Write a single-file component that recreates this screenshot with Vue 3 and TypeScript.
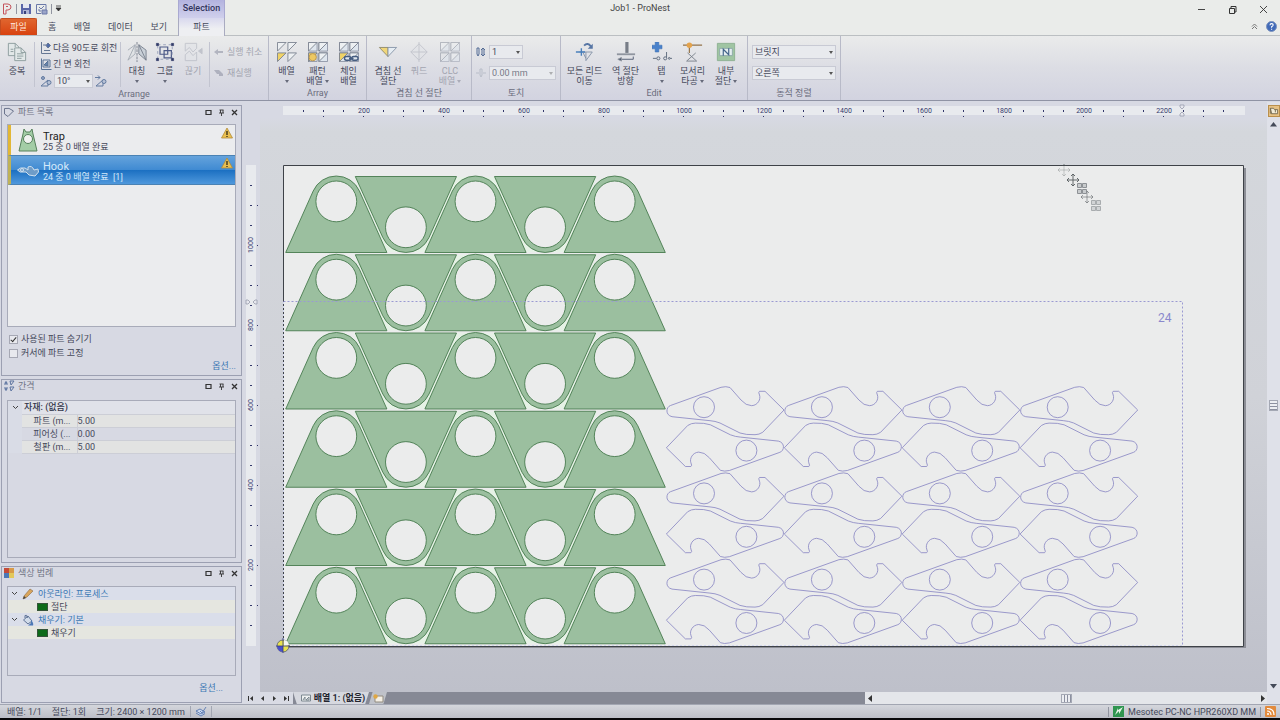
<script setup lang="ts">
import { ref } from 'vue'

interface Tool {
  icon: string
  lines: string[]
  arrow?: boolean
  off?: boolean
  size?: string
}

const arrayTools: Tool[] = [
  { icon: 'array', lines: ['배열'], arrow: true },
  { icon: 'pattern', lines: ['패턴', '배열'], arrow: true },
  { icon: 'chain', lines: ['체인', '배열'] },
]
const cutTools: Tool[] = [
  { icon: 'common', lines: ['겹침 선', '절단'] },
  { icon: 'quad', lines: ['쿼드'], off: true },
  { icon: 'clc', lines: ['CLC', '배열'], arrow: true, off: true },
]
const editTools: Tool[] = [
  { icon: 'leads', lines: ['모든 리드', '이동'], size: 'wide' },
  { icon: 'reverse', lines: ['역 절단', '방향'], size: 'wide' },
  { icon: 'tab', lines: ['탭'], arrow: true },
  { icon: 'corner', lines: ['모서리', '타공'], arrow: true },
  { icon: 'inner', lines: ['내부', '절단'], arrow: true, size: 'mid' },
]
const arrangeTools: Tool[] = [
  { icon: 'mirror', lines: ['대칭'], arrow: true },
  { icon: 'group', lines: ['그룹'], arrow: true },
  { icon: 'break', lines: ['끊기'], off: true },
]
const toolGroups = [
  { name: 'Array', tools: arrayTools, cls: 'g-array' },
  { name: '겹침 선 절단', tools: cutTools, cls: 'g-cut' },
]

const tabs = ['홈', '배열', '데이터', '보기']
const panelButtons = [
  { name: 'Maximize', d: 'M1 1.500H6V5.500H1Z', w: 1.2 },
  { name: 'Pin', d: 'M1.500 1H5.500M2.500 1V4M5 1V4M1 4H6M3.500 4V7', w: 0.9 },
  { name: 'Close', d: 'M1 1L6 6M6 1L1 6', w: 1.3 },
]
const sheetButtons = [
  { name: 'First', d: 'M1 1H2V6H1ZM6 1V6L3 3.500Z' },
  { name: 'Previous', d: 'M5 1V6L2 3.500Z' },
  { name: 'Next', d: 'M2 1V6L5 3.500Z' },
  { name: 'Last', d: 'M1 1V6L4 3.500ZM5 1H6V6H5Z' },
]
const hideUsed = ref(true)
const lockCursor = ref(false)
const selected = ref('Hook')
const parts = [
  { name: 'Trap', info: '25 중 0 배열 완료' },
  { name: 'Hook', info: '24 중 0 배열 완료  [1]' },
]
const spacing = [
  { name: '파트 (m...', value: '5.00' },
  { name: '피어싱 (...', value: '0.00' },
  { name: '철판 (m...', value: '5.00' },
]

const rows = [0, 1, 2, 3, 4, 5].map((i) => i * 78.25)
const ups = [0, 139.2, 278.4]
const downs = [0, 139.2]
const hookCols = [0, 1, 2, 3].map((i) => i * 117.9)
const hookRows = [0, 86.2, 172.4]
const hook =
  'M672 416.7C665 415 666 407 670.5 405.5L721 387.3Q726 386 730 387.5L741 400Q746 405.8 751.7 405.7C758 405.3 761 399 759.5 395Q758 392 759.5 391.3H765L784 410L762.7 432.3Q759 434.7 755 434.7Q746 435 740 433L720 423Q715 421 710 420.7Z'
const ruler = Array.from({ length: 47 }, (_, i) => i + 1)
const rulerY = Array.from({ length: 23 }, (_, i) => i + 1)
</script>

<template>
  <div class="app">
    <header>
      <div class="title-row">
        <div class="left-title">
          <div class="qat">
            <svg width="12" height="12" viewBox="0 0 12 12" fill="none" stroke="#c5545c" aria-hidden="true"><path d="M2.500 11V1H7Q10 1.500 10 4T7 7H5V11ZM5 3.500H7" /></svg>
            <i class="vline"></i>
            <button aria-label="Save"><svg width="12" height="12" viewBox="0 0 12 12"><path d="M1 1H11V11H1Z" fill="#5a66a8" /><path d="M3 1H9V5H3Z" fill="#e6e8f2" /><path d="M3 7H9V11H3Z" fill="#aeb4d4" /><path d="M4 8H6V11H4Z" fill="#38427c" /></svg></button>
            <button aria-label="Save job"><svg width="13" height="12" viewBox="0 0 13 12" fill="none" stroke="#6b79a8"><path d="M1.500 1.500H11V7M1.500 1.500V10.500H6M4 4L6 6L9 3M4 6V8H6" /><path d="M7 7H12V11H7Z" fill="#9aa4c8" /></svg></button>
            <i class="vline"></i>
            <button aria-label="Customize"><svg width="7" height="7" viewBox="0 0 7 7"><path d="M1 1H6M1 3L3.500 6L6 3Z" stroke="#333" stroke-width=".8" fill="#333" /></svg></button>
          </div>
          <div class="context">Selection</div>
        </div>
        <h1>Job1 - ProNest</h1>
        <div class="win">
          <button aria-label="Minimize"><svg width="9" height="9" viewBox="0 0 9 9" stroke="#444"><path d="M1 4.500H8" /></svg></button>
          <button aria-label="Restore"><svg width="9" height="9" viewBox="0 0 9 9" fill="none" stroke="#333"><path d="M1.500 3.500H6.500V8.500H1.500ZM3 3V1.500H8V7H7" /></svg></button>
          <button aria-label="Close"><svg width="9" height="9" viewBox="0 0 9 9" stroke="#333" stroke-width=".9"><path d="M1 1L8 8M8 1L1 8" /></svg></button>
        </div>
      </div>
      <nav class="tab-row">
        <button class="file">파일</button>
        <div class="tabs"><button v-for="t in tabs" :key="t">{{ t }}</button></div>
        <button class="active">파트</button>
        <div class="help">
          <button aria-label="Collapse ribbon"><svg width="7" height="7" viewBox="0 0 7 7" fill="none" stroke="#777"><path d="M1 3.500L3.500 1L6 3.500M1 6L3.500 3.500L6 6" /></svg></button>
          <button aria-label="Help"><svg width="11" height="11" viewBox="0 0 11 11"><circle cx="5.500" cy="5.500" r="5" fill="#416ab8" stroke="#7c93bd" /><path d="M4 4.200Q4 2.600 5.600 2.600T7.100 4.200Q7 5 5.600 5.700V6.700M5.600 7.700V8.700" fill="none" stroke="#fff" stroke-width="1.100" /></svg></button>
        </div>
      </nav>
    </header>

    <section class="ribbon">
      <div class="group g-arrange">
        <div class="body">
          <button class="tool dup">
            <svg class="ico" viewBox="0 0 22 22" fill="#e2e8e8" stroke="#8a9a9c"><path d="M1.500 1.500H9L13 5.500V15H1.500Z" /><path d="M8.500 6.500H15.500L20.500 11.500V20.500H8.500Z" /><path d="M15.500 6.500V11.500H20.500M9 1.500V5.500M11 13H18M11 15.500H18M11 18H16M4 8H7M4 10.500H7" fill="none" /></svg>
            <span>중복</span>
          </button>
          <i class="sep"></i>
          <div class="stack">
            <button><svg width="12" height="12" viewBox="0 0 12 12" fill="none" stroke="#667894"><path d="M1.500 0V11.500H11M4 8.500H10M3 3H6" /><path d="M8 1L10.500 3.500L8 6L6 3.500Z" fill="#506caa" /></svg>다음 90도로 회전</button>
            <button><svg width="12" height="12" viewBox="0 0 12 12" fill="none" stroke="#587296"><path d="M1.500 .500V11.500H11.500M3 2H10V9H3Z" /><path d="M4 7L8 3V8Z" fill="#6684ac" /></svg>긴 면 회전</button>
            <div class="angle">
              <button aria-label="Rotate left"><svg width="12" height="12" viewBox="0 0 12 12" fill="none" stroke="#637ba0"><path d="M1 11L8 5V11Z" /><circle cx="3" cy="3" r="1.500" fill="#96a6c4" /><circle cx="9" cy="7.500" r="2" fill="#b8c2d6" /></svg></button>
              <span class="pick"><select aria-label="Angle"><option>10°</option></select></span>
              <button aria-label="Rotate right"><svg width="12" height="12" viewBox="0 0 12 12" fill="none" stroke="#637ba0"><path d="M0 2.500H5M3 .500L5 2.500L3 4.500M1 11L8 5V11Z" /><circle cx="9" cy="6.500" r="2" fill="#b8c2d6" /></svg></button>
            </div>
          </div>
          <i class="sep"></i>
          <div class="tools trio">
            <button v-for="t in arrangeTools" :key="t.icon" class="tool slim" :disabled="t.off">
              <svg v-if="t.icon === 'mirror'" class="ico" viewBox="0 0 22 22" fill="none" stroke="#777f8c"><path d="M11 0V22" stroke-dasharray="3 1" /><path d="M9 3V13L1 20ZM1 9L9 3" stroke="#a4abb4" fill="#e0e3e6" /><path d="M13 3L21 20L13 13ZM13 3L21 9V20" fill="#c9d0d8" /></svg>
              <svg v-else-if="t.icon === 'group'" class="ico" viewBox="0 0 22 22" fill="none" stroke="#4d5a88"><path d="M5.500 5.500H14V13.500H5.500ZM10 9.500H18V17.500H10Z" stroke-width="1.300" /><path d="M3 3H19V19H3Z" stroke-dasharray="3 3" stroke="#97a0ba" /><path d="M1.500 1.500H4V4H1.500ZM18 1.500H20.500V4H18ZM1.500 18H4V20.500H1.500ZM18 18H20.500V20.500H18Z" fill="#303a68" stroke="#303a68" stroke-width=".6" /></svg>
              <svg v-else class="ico" viewBox="0 0 22 22" fill="#e2e4e8" stroke="#a0a5b2"><path d="M2.500 1.500H15V7L11 11L7 6L2.500 10ZM2.500 14L7 10L11 15L15 11V20.500H2.500Z" /><path d="M21 7V13L17 10Z" fill="#a0a5b2" /></svg>
              <span>{{ t.lines[0] }}</span>
              <b v-if="t.arrow" class="tri"></b>
            </button>
          </div>
          <i class="sep"></i>
          <div class="undo">
            <button disabled><svg width="10" height="8" viewBox="0 0 10 8"><path d="M0 4L4 1V3H9V5H4V7Z" fill="#83879a" /></svg>실행 취소</button>
            <button disabled><svg width="10" height="8" viewBox="0 0 10 8"><path d="M0 1H5L9 5V7H5V5H3Z" fill="#83879a" /></svg>재실행</button>
          </div>
        </div>
        <div class="caption">Arrange</div>
      </div>

      <div v-for="g in toolGroups" :key="g.name" class="group" :class="g.cls">
        <div class="body tools">
          <button v-for="t in g.tools" :key="t.icon" class="tool" :disabled="t.off">
            <svg v-if="t.icon === 'common'" class="ico" viewBox="0 0 22 22" stroke="#8f8a6c"><path d="M1.500 6H11V16Z" fill="#f0d679" /><path d="M11 6H20.500L11 16Z" fill="#e6edf3" stroke="#8795a8" /></svg>
            <svg v-else-if="t.icon === 'quad'" class="ico" viewBox="0 0 22 22" fill="#e2e4e8" stroke="#a2a6b2"><path d="M11 2L20 11L11 20L2 11ZM11 0V22M2 11H20" /></svg>
            <svg v-else class="ico" viewBox="0 0 22 22" fill="#edf0f2" stroke="#7a8290">
              <path v-if="t.icon !== 'array'" d="M.500 .500H10V10H.500ZM12 .500H21.500V10H12ZM.500 12H10V21.500H.500ZM12 12H21.500V21.500H12Z" fill="#dfe6ee" stroke="#8c94a4" />
              <path d="M.500 .500H10L.500 10ZM12 .500H21.500L12 10ZM12 12H21.500L12 21.500Z" />
              <path d="M.500 12H10L.500 21.500Z" :fill="t.off ? '#e3e5e8' : '#f0d367'" />
              <circle v-if="t.icon === 'pattern'" cx="5.200" cy="16.700" r="4" fill="#edc862" stroke="#ba9550" />
              <g v-if="t.icon === 'chain'" fill="#dfe6ee" stroke="#465d80" stroke-width="1.600"><rect x="6" y="16" width="7" height="4" rx="2" /><rect x="14" y="16" width="7" height="4" rx="2" /><path d="M11 18H16" /></g>
            </svg>
            <span>{{ t.lines[0] }}</span>
            <span v-if="t.lines[1]">{{ t.lines[1] }}<b v-if="t.arrow" class="tri"></b></span>
            <b v-else-if="t.arrow" class="tri"></b>
          </button>
        </div>
        <div class="caption">{{ g.name }}</div>
      </div>

      <div class="group g-torch">
        <div class="body fields">
          <label><svg width="10" height="10" viewBox="0 0 10 10" fill="none" stroke="#536b94"><path d="M1 1H3V7L2 9L1 7ZM5 5H9M7 1L5 3H9ZM7 9L5 7H9Z" /></svg><span class="pick small"><select aria-label="Torch count"><option>1</option></select></span></label>
          <label><svg width="10" height="10" viewBox="0 0 10 10" fill="none" stroke="#b8bdc8"><path d="M4 1H6V7L5 9L4 7ZM0 5H3M7 5H10" /></svg><span class="pick off"><select aria-label="Torch spacing" disabled><option>0.00 mm</option></select></span></label>
        </div>
        <div class="caption">토치</div>
      </div>

      <div class="group g-edit">
        <div class="body tools">
          <button v-for="t in editTools" :key="t.icon" class="tool" :class="t.size">
            <svg v-if="t.icon === 'leads'" class="ico" viewBox="0 0 22 22" fill="none" stroke="#6684b0"><path d="M5 11H19L12 20.500V11M9 12L12 18" stroke="#8493a8" /><path d="M1 11H11M7 7V15" stroke="#4a80bc" stroke-width="1.500" /><path d="M10 4Q14 0 17.500 5" stroke="#5675a4" stroke-width="2.200" /><path d="M19.500 2V7.500H14Z" fill="#5675a4" stroke="none" /></svg>
            <svg v-else-if="t.icon === 'reverse'" class="ico" viewBox="0 0 22 22" fill="none" stroke="#8f959f"><path d="M1 13.500H21" stroke-width="2" /><path d="M12 0V12" stroke="#777d87" stroke-width="3.500" /><path d="M19 16V19H4" stroke="#4c5870" /><path d="M2 19L6 17V21Z" fill="#4c5870" /></svg>
            <svg v-else-if="t.icon === 'tab'" class="ico" viewBox="0 0 22 22" fill="none" stroke="#596779"><path d="M3.500 0H7.500V3.500H11V7.500H7.500V11H3.500V7.500H0V3.500H3.500Z" fill="#4a82cb" stroke="#3d70b3" stroke-width=".6" /><path d="M1 18H5M16 11V17M20 18H22" /><circle cx="7" cy="18" r="1.700" /><circle cx="14.500" cy="18" r="1.700" /><circle cx="19" cy="18" r="1" /></svg>
            <svg v-else-if="t.icon === 'corner'" class="ico" viewBox="0 0 22 22" fill="none" stroke="#78808a"><path d="M0 3.500H21M7 4V12" stroke="#93734a" stroke-width="1.300" /><circle cx="7" cy="3.500" r="3" fill="#e4a34c" stroke="none" /><path d="M5 12L15 21H4L14 12" /></svg>
            <svg v-else class="ico" viewBox="0 0 22 22" fill="none" stroke="#5a7c80"><path d="M1.500 1.500H20.500V20.500H1.500Z" fill="#a0c5a3" stroke="#8caf92" /><path d="M4 7H18V15H4Z" fill="#e5eef0" stroke="#8ca8a8" /><path d="M8 15V8L14 14V7" stroke="#44668c" stroke-width="1.300" /></svg>
            <span>{{ t.lines[0] }}</span>
            <span v-if="t.lines[1]">{{ t.lines[1] }}<b v-if="t.arrow" class="tri"></b></span>
            <b v-else-if="t.arrow" class="tri"></b>
          </button>
        </div>
        <div class="caption">Edit</div>
      </div>

      <div class="group g-align">
        <div class="body fields">
          <span class="pick"><select aria-label="Align mode"><option>브릿지</option></select></span>
          <span class="pick"><select aria-label="Align side"><option>오른쪽</option></select></span>
        </div>
        <div class="caption">동적 정렬</div>
      </div>
    </section>

    <main>
      <aside>
        <section class="panel">
          <div class="phead">
            <svg width="12" height="12" viewBox="0 0 12 12" fill="none" stroke="#6b748c"><path d="M1.500 2.500Q6 1 10.500 5L5 10.500L1.500 8Z" /></svg>
            <h2>파트 목록</h2>
            <button v-for="b in panelButtons" :key="b.name" :aria-label="b.name"><svg width="7" height="7" viewBox="0 0 7 7"><path :d="b.d" fill="none" stroke="#333" :stroke-width="b.w" /></svg></button>
          </div>
          <div class="box list">
            <button v-for="p in parts" :key="p.name" class="part" :class="{ on: p.name === selected }" @click="selected = p.name">
              <svg v-if="p.name === 'Trap'" width="22" height="26" viewBox="0 0 22 26"><path d="M2 24L6 7L7 2L9 5H13L15 2L16 7L20 24Z" fill="#a3cda6" stroke="#56805c" /><circle cx="11" cy="12" r="4.500" fill="#f0f2f0" stroke="#56805c" /></svg>
              <svg v-else width="22" height="26" viewBox="0 0 22 26"><path d="M.500 13Q3 10 8 11L11 13L11 10Q15 8 17 13L21 12L21.500 15L18 19L12 18L9 15L3 15Z" fill="#6e9cc8" stroke="#d1e1ee" /><circle cx="5" cy="13" r="1.500" fill="none" stroke="#d1e1ee" /></svg>
              <span class="ptxt"><strong>{{ p.name }}</strong><small>{{ p.info }}</small></span>
              <svg class="warn" width="12" height="12" viewBox="0 0 12 12"><path d="M6 1L11.500 11H.500Z" fill="#e9bf50" stroke="#b38c3a" stroke-width=".8" /><path d="M6 4V8M6 9V10" stroke="#3e3418" stroke-width="1.400" /></svg>
            </button>
          </div>
          <div class="checks">
            <label><input v-model="hideUsed" type="checkbox" />사용된 파트 숨기기</label>
            <label><input v-model="lockCursor" type="checkbox" />커서에 파트 고정</label>
          </div>
          <a href="#" class="opt">옵션...</a>
        </section>

        <section class="panel mid">
          <div class="phead">
            <svg width="12" height="12" viewBox="0 0 12 12" fill="none" stroke="#5d74a0"><path d="M1 4H5M1 8H5M3 1V4M3 8V11M2 2L3 3.500L4 2M2 10L3 8.500L4 10M7 1H11L8 5ZM7 7H11L8 11Z" /></svg>
            <h2>간격</h2>
            <button v-for="b in panelButtons" :key="b.name" :aria-label="b.name"><svg width="7" height="7" viewBox="0 0 7 7"><path :d="b.d" fill="none" stroke="#333" :stroke-width="b.w" /></svg></button>
          </div>
          <div class="box">
            <table>
              <colgroup><col class="c-gut" /><col class="c-name" /><col /></colgroup>
              <thead><tr><th class="gut"><svg width="7" height="5" viewBox="0 0 7 5"><path d="M1 1L3.500 3.500L6 1" fill="none" stroke="#444" /></svg></th><th colspan="2">자재: (없음)</th></tr></thead>
              <tbody><tr v-for="s in spacing" :key="s.name"><td class="gut"></td><td class="name">{{ s.name }}</td><td>{{ s.value }}</td></tr></tbody>
            </table>
          </div>
        </section>

        <section class="panel">
          <div class="phead">
            <svg width="12" height="12" viewBox="0 0 12 12"><path d="M1 1H6V6H1Z" fill="#c44b39" /><path d="M6 1H11V6H6Z" fill="#d89a47" /><path d="M1 6H6V11H1Z" fill="#4c78b6" /><path d="M6 6H11V11H6Z" fill="#e3c85a" /></svg>
            <h2>색상 범례</h2>
            <button v-for="b in panelButtons" :key="b.name" :aria-label="b.name"><svg width="7" height="7" viewBox="0 0 7 7"><path :d="b.d" fill="none" stroke="#333" :stroke-width="b.w" /></svg></button>
          </div>
          <div class="box legend">
            <div class="cat"><svg width="7" height="5" viewBox="0 0 7 5"><path d="M1 1L3.500 3.500L6 1" fill="none" stroke="#444" /></svg><svg width="12" height="12" viewBox="0 0 12 12"><path d="M1 11L2 8L8 1L11 3L5 9Z" fill="#d9a55c" stroke="#8a6a44" stroke-width=".6" /><path d="M1 11L2 8L4 10Z" fill="#444" /></svg>아웃라인: 프로세스</div>
            <div class="leaf"><i></i>절단</div>
            <div class="cat"><svg width="7" height="5" viewBox="0 0 7 5"><path d="M1 1L3.500 3.500L6 1" fill="none" stroke="#444" /></svg><svg width="12" height="12" viewBox="0 0 12 12" fill="#d2dcea" stroke="#5f7396"><path d="M1.500 6L6 2L10 7L6 10ZM3 4V1.500Q5 0 5.500 4" /><path d="M9 6Q12 9 11 11.500H6L9 9Z" fill="#4c78b6" stroke="none" /></svg>채우기: 기본</div>
            <div class="leaf"><i></i>채우기</div>
          </div>
          <a href="#" class="opt inset">옵션...</a>
        </section>
      </aside>

      <div class="work">
        <svg class="stage" viewBox="242 102 1025 590" preserveAspectRatio="xMinYMin meet">
          <defs>
            <path id="hook-part" :d="hook" />
          </defs>
          <rect x="283" y="106" width="962" height="9" fill="#e8eaee" />
          <rect x="246" y="165" width="10" height="481" fill="#e8eaee" />
          <g fill="#34386c">
            <template v-for="i in ruler" :key="i">
              <text v-if="i % 4 === 0" :x="284 + i * 20" y="113" class="rt">{{ i * 50 }}</text>
              <rect v-else :x="283 + i * 20" y="110" width="1" height="2" />
              <rect v-if="i % 2 === 0" :x="283 + i * 20" y="116" width="1" height="1" />
            </template>
            <template v-for="i in rulerY" :key="i">
              <text v-if="i % 4 === 0" class="rt" :transform="`translate(253 ${645 - i * 20}) rotate(-90)`">{{ i * 50 }}</text>
              <rect v-else x="250" :y="645 - i * 20" width="2" height="1" />
              <rect v-if="i % 2 === 0" x="257" :y="645 - i * 20" width="1" height="1" />
            </template>
          </g>
          <path d="M1180 105H1184V107L1182 109L1180 107ZM1180 116V114L1182 112L1184 114V116ZM246 300H248L250 302L248 304H246ZM257 300H255L253 302L255 304H257Z" fill="#e6e7ee" stroke="#8e92a4" stroke-width=".7" />

          <path d="M286 168H1246V648H286Z" fill="#8c8e96" />
          <path d="M283.500 165.500H1243.500V646.500H283.500Z" fill="#ebecec" stroke="#3e4248" />

          <g v-for="y in rows" :key="y" :transform="`translate(0 ${y})`" fill="#9bbf9f" stroke="#477a4e" stroke-width=".9">
            <path d="M354 177H597L575 226L568 252H383L376 226Z" fill="#e6f2e6" stroke="none" />
            <path v-for="x in ups" :key="x" :transform="`translate(${x} 0)`" d="M285.700 252.500L313.200 191A25.300 25.300 0 0 1 359.400 191L386.900 252.500Z" />
            <path v-for="x in downs" :key="'d' + x" :transform="`translate(${x} 0)`" d="M355.300 176.500L382.800 237.500A25.300 25.300 0 0 0 429 237.500L456.500 176.500Z" />
            <g fill="#ebecec">
              <circle v-for="x in ups" :key="'c' + x" :cx="336.3 + x" cy="201.400" r="20.400" />
              <circle v-for="x in downs" :key="'e' + x" :cx="405.9 + x" cy="227.300" r="20.400" />
            </g>
          </g>

          <g fill="none" stroke="#8583c2" stroke-width=".8">
            <template v-for="y in hookRows" :key="y">
              <g v-for="x in hookCols" :key="x" :transform="`translate(${x} ${y})`">
                <use href="#hook-part" />
                <circle cx="704" cy="407.200" r="10.500" />
                <g transform="rotate(180 725.200 428.900)">
                  <use href="#hook-part" />
                  <circle cx="704" cy="407.200" r="10.500" />
                </g>
              </g>
            </template>
          </g>

          <path d="M283.500 301.500H1182.500V645.500" fill="none" stroke="#9a9ad2" stroke-dasharray="2 2" />
          <path d="M283.500 302V645.500H1182" fill="none" stroke="#d4d8ee" stroke-dasharray="2 2" />
          <text x="1158" y="322" class="count">24</text>

          <circle cx="283" cy="646" r="6" fill="#e8e24e" stroke="#555a70" stroke-width=".8" />
          <path d="M283 646V652A6 6 0 0 1 277 646Z" fill="#4a50c8" />
          <path d="M284 646V640A6 6 0 0 1 289 645Z" fill="#f4f6f2" />
          <path d="M283 638V653M276 646H290" stroke="#333a80" stroke-width=".8" />

          <g fill="none" stroke-width=".9">
            <g id="move-mark" stroke="#555b5e"><path d="M1067 180H1079M1073 174V186M1069 178L1067 180L1069 182M1077 178L1079 180L1077 182M1071 176L1073 174L1075 176M1071 184L1073 186L1075 184" /></g>
            <use href="#move-mark" x="-9" y="-10" opacity=".3" />
            <use href="#move-mark" x="14" y="17" opacity=".6" />
            <path id="grid-mark" d="M1077.500 183.500H1081.500V187.500H1077.500ZM1082.500 183.500H1086.500V187.500H1082.500ZM1077.500 189.500H1081.500V193.500H1077.500ZM1082.500 189.500H1086.500V193.500H1082.500Z" fill="#c8cbcd" stroke="#84888c" />
            <use href="#grid-mark" x="14" y="17" opacity=".7" />
          </g>
        </svg>
        <div class="vbar">
          <button class="zoomfit" aria-label="Zoom"><svg width="10" height="10" viewBox="0 0 11 11" fill="#f2ecd8" stroke="#73684d"><path d="M1.500 2.500H5L6 4H9.500V8.500H3ZM1.500 2.500V8L3 8.500M7 4V7" /></svg></button>
          <button aria-label="Scroll up"><svg width="7" height="5" viewBox="0 0 7 5"><path d="M0 4.500L3.500 0L7 4.500Z" fill="#444a58" /></svg></button>
          <div class="track"><i></i></div>
          <button aria-label="Scroll down"><svg width="7" height="5" viewBox="0 0 7 5"><path d="M0 0H7L3.500 4.500Z" fill="#444a58" /></svg></button>
        </div>
        <div class="sheetbar">
          <div class="navs">
            <button v-for="b in sheetButtons" :key="b.name" :aria-label="b.name"><svg width="7" height="7" viewBox="0 0 7 7" fill="#333"><path :d="b.d" /></svg></button>
          </div>
          <button class="sheet"><svg width="10" height="8" viewBox="0 0 10 8" fill="#eef0f0" stroke="#7c8890"><path d="M.500 1H9.500V7H.500ZM2 6L4 3V6M5 6L8 3V6Z" /></svg>배열 1: (없음)</button>
          <button class="newsheet" aria-label="New nest"><svg width="11" height="9" viewBox="0 0 11 9"><path d="M2 2H10V8H2Z" fill="#f4efe4" stroke="#928b80" /><circle cx="2.500" cy="2.500" r="2.200" fill="#dfa744" /></svg></button>
          <div class="fill"></div>
          <div class="hbar">
            <button aria-label="Scroll left"><svg width="5" height="7" viewBox="0 0 5 7"><path d="M4 0V7L0 3.500Z" fill="#333" /></svg></button>
            <div class="track"><i></i></div>
            <button aria-label="Scroll right"><svg width="5" height="7" viewBox="0 0 5 7"><path d="M1 0V7L5 3.500Z" fill="#333" /></svg></button>
          </div>
          <div class="corner"></div>
        </div>
      </div>
    </main>

    <footer>
      <span>배열: 1/1</span><span>절단: 1회</span><span>크기: 2400 × 1200 mm</span>
      <div class="foot-icon">
        <svg width="12" height="11" viewBox="0 0 12 11" fill="#cddaf0" stroke="#5a79b0" stroke-width=".9"><path d="M1 5L5 3L10 6L6 8ZM1 7L6 10L10 7.500" /><path d="M5 5L7 7L11 1" fill="none" /></svg>
      </div>
      <div class="machine">
        <i class="vline"></i>
        <svg width="11" height="11" viewBox="0 0 11 11"><path d="M0 0H11V11H0Z" fill="#2f9550" /><path d="M2 9L6 5V8L10 1L5 4V2Z" fill="#e8f5e8" /></svg>
        <span>Mesotec PC-NC HPR260XD MM</span>
        <i class="vline"></i>
        <svg width="11" height="11" viewBox="0 0 11 11"><rect width="11" height="11" rx="1" fill="#e28a3c" /><g fill="none" stroke="#fff" stroke-width="1.200"><path d="M2 5Q6 5 6 9M2 2.500Q9 2.500 9 9" /></g><circle cx="3" cy="8" r="1" fill="#fff" /></svg>
      </div>
    </footer>
  </div>
</template>

<style>
body {
  margin: 0;
  background: #08080a;
}
</style>

<style scoped>
.app {
  box-sizing: border-box;
  display: flex;
  flex-direction: column;
  height: 100vh;
  padding-bottom: 2px;
  overflow: hidden;
  background: #08080a;
  color: #45485a;
  font: 9px/10px Roboto, "Noto Sans CJK KR", sans-serif;
}
.app *,
.app *::before,
.app *::after { box-sizing: border-box; }
button, select, input {
  margin: 0;
  padding: 0;
  border: 0;
  background: none;
  color: inherit;
  font: inherit;
}
button {
  display: inline-flex;
  align-items: center;
  justify-content: center;
  white-space: nowrap;
}
svg { display: block; flex: none; }
h1, h2 { margin: 0; font: inherit; }

header { flex: none; background: #eaecea; border-bottom: 1px solid #bbbfc2; }
.title-row { display: grid; grid-template-columns: 1fr auto 1fr; height: 18px; }
.left-title { display: flex; }
.qat { display: flex; align-items: center; gap: 3px; width: 178px; padding-left: 1px; padding-bottom: 1px; }
.vline { width: 1px; height: 10px; background: #9195a0; }
.context { width: 47px; padding-top: 3px; text-align: center; color: #32345c; font-weight: 500; background: linear-gradient(#b3b3df, #d0d0ec); border: 1px solid #a9a9d2; border-width: 0 1px; }
h1 { line-height: 16px; color: #444; }
.win { display: flex; justify-content: flex-end; align-items: center; gap: 22px; padding-right: 12px; }
.tab-row { display: flex; height: 17px; }
.file { width: 37px; color: #ffe9dd; background: linear-gradient(#e0662f, #d8420f); border: 1px solid #c34d20; border-bottom: 0; border-radius: 2px 2px 0 0; }
.tabs { display: flex; justify-content: space-between; width: 141px; padding: 0 11px; }
.active { width: 47px; margin-bottom: -1px; background: linear-gradient(#d8d8ee, #eeeff2 60%); border: 1px solid #a9abc0; border-width: 0 1px; }
.help { display: flex; align-items: center; gap: 8px; margin-left: auto; padding-right: 3px; }

.ribbon { display: flex; flex: none; height: 65px; background: linear-gradient(#eaebeb, #dcdde4 50%, #d2d3e0); border-bottom: 1px solid #8f93a4; }
.group { display: flex; flex-direction: column; flex: none; border-right: 1px solid #b8bac8; }
.g-arrange { width: 269px; }
.g-array { width: 98px; }
.g-cut { width: 105px; }
.g-torch { width: 89px; }
.g-edit { width: 187px; }
.g-align { width: 93px; }
.body { display: flex; flex: 1; padding-top: 6px; }
.caption { height: 13px; text-align: center; line-height: 12px; color: #6a6c7c; }
.tools { display: flex; justify-content: center; align-items: flex-start; }
.trio { padding: 0 2px; }
.tool { flex-direction: column; justify-content: flex-start; width: 31px; }
.tool span { display: flex; align-items: center; gap: 2px; height: 10px; }
.ico { width: 20px; height: 20px; margin-bottom: 4px; }
.body.tools, .body .tools { margin-bottom: -2px; }
.dup { width: 34px; }
.slim { width: 28px; }
.tool.wide { width: 41px; }
.tool.mid { width: 36px; }
.tri { width: 3px; height: 3px; border: 2px solid transparent; border-top: 3px solid #666a7a; border-bottom: 0; }
.tool > .tri { margin-top: 4px; }
button:disabled { color: #a3a5b0; }
button:disabled svg { opacity: .5; }
button:disabled .tri { opacity: .4; }
.sep { width: 1px; height: 45px; background: #c2c4d0; }
.stack { display: flex; flex-direction: column; gap: 4px; width: 85px; padding-left: 5px; align-items: flex-start; }
.stack button { gap: 1px; height: 12px; }
.angle { display: flex; align-items: center; gap: 2px; }
.undo { display: flex; flex-direction: column; gap: 11px; align-items: flex-start; padding: 5px 0 0 4px; }
.undo button { gap: 3px; }
.pick { position: relative; display: block; flex: none; width: 39px; height: 14px; }
.pick::after { content: ""; position: absolute; right: 3px; top: 6px; border: 2px solid transparent; border-top: 3px solid #555; border-bottom: 0; pointer-events: none; }
.pick.off::after { opacity: .4; }
.pick select { appearance: none; display: block; width: 100%; height: 100%; padding-left: 2px; background: #e8eaee; border: 1px solid #c8cad4; border-radius: 0; line-height: 12px; opacity: 1; }
.fields { flex-direction: column; justify-content: flex-start; gap: 7px; padding: 9px 4px 0; }
.fields label { display: flex; align-items: center; gap: 3px; }
.g-torch .pick { width: auto; flex: 1; }
.g-torch .pick.small { flex: 0 0 34px; }
.g-align .pick { width: 84px; }
select:disabled { color: #777a88; }

main { display: flex; flex: 1; min-height: 0; padding-top: 1px; background: #d7d9e3; }
aside { display: grid; grid-template-rows: 271fr 184fr 137fr; gap: 3px; flex: none; width: 242px; padding: 3px 0 1px 1px; }
.panel { display: flex; flex-direction: column; min-height: 0; padding: 0 5px; border: 1px solid #9ca0b2; }
.panel.mid { padding-bottom: 4px; }
.phead { display: flex; align-items: center; gap: 6px; flex: none; height: 12px; margin: 0 -2px 0 -4px; }
.phead h2 { flex: 1; color: #707384; margin-left: -3px; }
.box { flex: 1; min-height: 0; margin-top: 8px; border: 1px solid #a8abb9; }
.list { margin-top: 6px; background: #ebecee; }
.part { display: flex; align-items: flex-start; justify-content: flex-start; width: 100%; height: 30px; padding: 2px 2px 0 6px; border-left: 3px solid #e2b736; text-align: left; }
.part.on { color: #d5e9fa; background: linear-gradient(#65a3dc, #3f8ad2 50%, #1c70c2 51%, #4f98dc); border-top: 1px solid #4a82b4; border-bottom: 1px solid #4a82b4; border-left-color: #bfb258; padding-top: 1px; }
.ptxt { display: flex; flex-direction: column; flex: 1; margin-left: 4px; padding-top: 4px; }
.ptxt strong { font-size: 11px; line-height: 11px; font-weight: 400; }
.ptxt small { font-size: 9px; line-height: 11px; white-space: pre; }
.part:not(.on) strong { color: #222; }
.checks { display: flex; flex-direction: column; gap: 4px; margin: 7px 0 0 2px; }
.checks label { display: flex; align-items: center; gap: 3px; }
.checks input { appearance: none; width: 9px; height: 9px; background: #e8e9ee; border: 1px solid #a6a8b4; }
.checks input:checked { display: grid; place-items: center; }
.checks input:checked::before { content: ""; width: 3px; height: 6px; border: solid #333; border-width: 0 1px 1px 0; rotate: 40deg; }
.opt { align-self: flex-end; margin: 3px 0 4px; color: #3b78b4; text-decoration: none; }
.opt.inset { margin: 7px 13px 9px; }
table { width: 100%; border-collapse: collapse; table-layout: fixed; }
.c-gut { width: 14px; }
.c-name { width: 55px; }
th, td { height: 13px; padding: 0 0 0 2px; border-bottom: 1px solid #ccced6; text-align: left; line-height: 12px; }
th { background: #e0e2e9; color: #33364a; font-weight: 500; }
th.gut, td.gut { padding: 0 0 0 4px; background: #d9dce6; border-bottom: 0; }
td.name { padding: 0 6px 0 0; text-align: right; border-right: 1px solid #ccced6; }
td:last-child { padding-left: 0; }
tbody tr:nth-child(odd) td:not(.gut) { background: #e2e3e2; }
.legend { margin-top: 7px; }
.cat, .leaf { display: flex; align-items: center; height: 13px; }
.cat { gap: 4px; padding-left: 3px; color: #3b78b4; background: #dadeea; }
.leaf { gap: 3px; padding-left: 29px; background: #e5e6e0; }
.leaf i { width: 11px; height: 8px; background: #0d6b18; border: 1px solid #35543a; }

.work { display: grid; grid-template-columns: minmax(0, 1fr) 13px; grid-template-rows: minmax(0, 1fr) 12px; flex: 1; min-width: 0; }
.stage { width: 100%; height: 100%; background: linear-gradient(90deg, #d7d9e3 18px, transparent 18px), linear-gradient(#d7d9e3 16px, #d4d7dc 30px, #d0d2d8 50%, #bec0ca); }
.rt { font-size: 7px; text-anchor: middle; }
.count { font-size: 12px; fill: #8a88cc; }
.vbar { display: flex; flex-direction: column; align-items: center; gap: 3px; padding: 3px 0 1px; background: #dfe1e9; }
.zoomfit { background: #e6c183; border: 1px solid #ba8f4c; width: 12px; height: 12px; }
.vbar button:not(.zoomfit) { height: 9px; }
.vbar .track { display: flex; flex: 1; align-items: center; }
.vbar .track i { width: 9px; height: 11px; background: repeating-linear-gradient(#eceef2 0 2px, #8c90a0 2px 3px); border: 1px solid #a4a8b4; }
.sheetbar { grid-column: 1 / -1; display: flex; background: #868995; }
.navs { display: flex; justify-content: space-around; width: 51px; padding-left: 2px; background: #d9dbe4; }
.sheet { gap: 3px; width: 76px; padding-left: 4px; color: #22242e; font-weight: 600; background: #d6d8df; clip-path: polygon(0 0, 100% 0, 95% 100%, 5% 100%); }
.newsheet { width: 18px; background: #bfc2c9; clip-path: polygon(20% 0, 100% 0, 80% 100%, 0 100%); }
.fill { flex: 478; }
.hbar { display: flex; align-items: center; flex: 402; background: #e4e6ea; }
.hbar button { width: 10px; height: 12px; }
.hbar .track { display: flex; flex: 1; justify-content: center; }
.hbar .track i { width: 11px; height: 9px; background: repeating-linear-gradient(90deg, #eceef2 0 2px, #8c90a0 2px 3px); border: 1px solid #a4a8b4; }
.corner { width: 13px; background: #dfe1e9; }

footer { display: flex; align-items: center; flex: none; gap: 10px; height: 14px; padding: 0 4px 0 7px; background: linear-gradient(#d4d6dc, #bcbec7); border-top: 1px solid #a2a6b2; }
.foot-icon { display: flex; justify-content: center; width: 22px; margin-left: -5px; border: 1px solid #a2a6b2; border-width: 0 1px; }
.machine { display: flex; align-items: center; gap: 4px; margin-left: auto; }
</style>
